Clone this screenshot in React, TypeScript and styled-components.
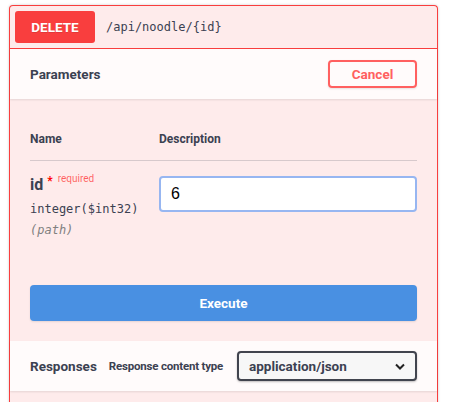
import React from "react";
import styled, { createGlobalStyle } from "styled-components";

const Global = createGlobalStyle`
  html, body { margin: 0; padding: 0; background: #fff; }
  body { font-family: Roboto, "Open Sans", sans-serif; color: #3b4151; }
  * { box-sizing: border-box; }
`;

const Page = styled.div`
  padding: 5px 12px 0 9px;
  width: 450px;
  height: 402px;
  overflow: hidden;
`;

const Block = styled.div`
  width: 429px;
  border: 1px solid #f93e3e;
  border-bottom: none;
  border-radius: 4px 4px 0 0;
  background: rgba(249, 62, 62, 0.1);
  box-shadow: 0 0 3px rgba(0, 0, 0, 0.19);
  min-height: 420px;
`;

const Summary = styled.div`
  display: flex;
  align-items: center;
  padding: 5px;
  border-bottom: 1px solid #f93e3e;
`;

const Method = styled.span`
  display: flex;
  align-items: center;
  justify-content: center;
  width: 80px;
  height: 32px;
  border-radius: 3px;
  background: #f93e3e;
  color: #fff;
  font-size: 13.5px;
  font-weight: 700;
  text-shadow: 0 1px 0 rgba(0, 0, 0, 0.1);
`;

const Path = styled.span`
  margin-left: 11px;
  font-family: "DejaVu Sans Mono", monospace;
  font-size: 12px;
  color: #3b4151;
`;

const SectionHeader = styled.div`
  display: flex;
  align-items: center;
  gap: ${(p: { $gap?: number }) => p.$gap ?? 14}px;
  height: 50px;
  padding: 8px 20px;
  background: rgba(255, 255, 255, 0.8);
  box-shadow: 0 1px 2px rgba(0, 0, 0, 0.1);
`;

const SectionTitle = styled.h4<{ $grow?: boolean }>`
  margin: 0;
  flex: ${(p) => (p.$grow ? 1 : "none")};
  font-size: 13.5px;
  font-weight: 700;
  color: #3b4151;
  white-space: nowrap;
`;

const CancelButton = styled.button`
  width: 89px;
  height: 28px;
  border: 2px solid #ff6060;
  border-radius: 4px;
  background: transparent;
  color: #ff6060;
  font-family: inherit;
  font-size: 13.5px;
  font-weight: 700;
  box-shadow: 0 1px 2px rgba(0, 0, 0, 0.1);
  padding: 0;
`;

const TableWrap = styled.div`
  padding: 20px 20px 0;
`;

const HeadRow = styled.div`
  display: grid;
  grid-template-columns: 129px 1fr;
  padding: 12px 0;
  border-bottom: 1px solid rgba(59, 65, 81, 0.2);
  font-size: 12px;
  font-weight: 700;
  line-height: 17px;
`;

const ParamRow = styled.div`
  display: grid;
  grid-template-columns: 129px 1fr;
  padding: 10px 0 0;
  height: 104px;
`;

const NameCell = styled.div`
  display: flex;
  flex-direction: column;
  padding-top: 3px;
`;

const ParamName = styled.div`
  font-size: 16px;
  font-weight: 700;
  line-height: 22px;
  display: flex;
  align-items: flex-start;
`;

const Star = styled.span`
  color: red;
  font-size: 12px;
  margin-left: 4px;
  line-height: 14px;
`;

const Required = styled.span`
  color: rgba(255, 0, 0, 0.6);
  font-size: 10px;
  font-weight: 400;
  margin-left: 5px;
  line-height: 12px;
  margin-top: -1px;
`;

const ParamType = styled.div`
  margin-top: 5px;
  font-family: "DejaVu Sans Mono", monospace;
  font-size: 12px;
  line-height: 17px;
`;

const ParamIn = styled.div`
  margin-top: 4px;
  font-family: "DejaVu Sans Mono", monospace;
  font-size: 12px;
  font-style: italic;
  color: gray;
  line-height: 17px;
`;

const Input = styled.input`
  margin-top: 5px;
  width: 258px;
  height: 36px;
  padding: 0 10px;
  border: 2px solid #97b6f1;
  border-radius: 4px;
  background: #fff;
  font-family: "Liberation Sans", Arial, sans-serif;
  font-size: 16px;
  color: #000;
  outline: none;
`;

const ExecuteWrap = styled.div`
  padding: 20px;
`;

const ExecuteButton = styled.button`
  width: 100%;
  height: 36px;
  border: none;
  border-radius: 4px;
  background: #4990e2;
  color: #fff;
  font-family: inherit;
  font-size: 13.5px;
  font-weight: 700;
  box-shadow: 0 1px 2px rgba(0, 0, 0, 0.1);
`;

const ContentTypeLabel = styled.span`
  font-size: 11.5px;
  font-weight: 700;
  letter-spacing: -0.2px;
  white-space: nowrap;
`;

const Select = styled.div`
  display: flex;
  align-items: center;
  justify-content: space-between;
  flex-shrink: 0;
  margin-left: auto;
  width: 180px;
  height: 30px;
  padding: 0 10px 0 10px;
  border: 2px solid #41444e;
  border-radius: 4px;
  background: #f7f7f7;
  font-size: 13.5px;
  font-weight: 700;
  color: #3b4151;
  box-shadow: 0 1px 2px rgba(0, 0, 0, 0.25);
`;

export default function App() {
  return (
    <Page>
      <Global />
      <Block>
        <Summary>
          <Method>DELETE</Method>
          <Path>/api/noodle/{"{id}"}</Path>
        </Summary>
        <SectionHeader>
          <SectionTitle $grow>Parameters</SectionTitle>
          <CancelButton>Cancel</CancelButton>
        </SectionHeader>
        <TableWrap>
          <HeadRow>
            <span>Name</span>
            <span>Description</span>
          </HeadRow>
          <ParamRow>
            <NameCell>
              <ParamName>
                id<Star>*</Star>
                <Required>required</Required>
              </ParamName>
              <ParamType>integer($int32)</ParamType>
              <ParamIn>(path)</ParamIn>
            </NameCell>
            <div>
              <Input defaultValue="6" />
            </div>
          </ParamRow>
        </TableWrap>
        <ExecuteWrap>
          <ExecuteButton>Execute</ExecuteButton>
        </ExecuteWrap>
        <SectionHeader $gap={12}>
          <SectionTitle>Responses</SectionTitle>
          <ContentTypeLabel>Response content type</ContentTypeLabel>
          <Select>
            <span>application/json</span>
            <svg width="10" height="7" viewBox="0 0 10 7">
              <path d="M1 1.5 L5 5.5 L9 1.5" fill="none" stroke="#222" strokeWidth="2" />
            </svg>
          </Select>
        </SectionHeader>
      </Block>
    </Page>
  );
}
